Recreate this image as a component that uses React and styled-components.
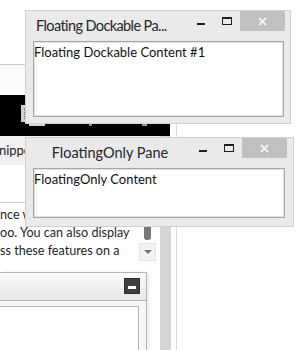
import React from 'react';
import styled, { createGlobalStyle } from 'styled-components';

const GlobalStyle = createGlobalStyle`
    html, body {
        margin: 0;
        padding: 0;
        background: #fff;
    }
    body {
        width: 300px;
        height: 350px;
        overflow: hidden;
        font-family: Lato, 'Open Sans', sans-serif;
        color: #1e1e1e;
    }
`;

const Desktop = styled.div`
    position: relative;
    width: 300px;
    height: 350px;
    overflow: hidden;
    background: #fff;
`;

/* ---------- the docking host behind the floating windows ---------- */

const DockHost = styled.div`
    margin-top: 64px;
    width: 177px;
    height: 286px;
    box-sizing: border-box;
    border-top: 1px solid #cdcdcd;
    border-right: 1px solid #dcdcdc;
    display: flex;
    flex-direction: column;
`;

const TopStrip = styled.div`
    height: 30px;
    background: #fbfbfb;
`;

const ImageBand = styled.div`
    position: relative;
    width: 170px;
    height: 41px;
    background: #000;
`;

const Grip = styled.div`
    position: absolute;
    left: 21px;
    top: 10px;
    width: 6px;
    height: 17px;
    background: #cfcfcf;
    &::after {
        content: '';
        position: absolute;
        left: 3px;
        top: 3px;
        bottom: 3px;
        border-left: 1px dotted #6a6a6a;
    }
`;

const Tab = styled.div`
    position: absolute;
    left: ${p => p.x}px;
    top: 28px;
    width: ${p => p.w}px;
    height: 3px;
    background: ${p => p.color || '#d6d6d6'};
`;

const Body = styled.div`
    flex: 1;
    display: flex;
`;

const LeftCol = styled.div`
    width: 160px;
    display: flex;
    flex-direction: column;
`;

const Splitter = styled.div`
    width: 11px;
    background: #d4d4d4;
`;

const TabRow = styled.div`
    height: 29px;
    line-height: 29px;
    background: #f1f1f1;
    font-size: 13px;
    white-space: nowrap;
    overflow: hidden;
    & > span {
        margin-left: -8px;
    }
`;

const Gap = styled.div`
    height: ${p => p.h}px;
    border-bottom: ${p => (p.line ? '1px solid #cdcdcd' : 'none')};
`;

const TextArea = styled.div`
    height: 58px;
    display: flex;
`;

const Lines = styled.div`
    width: 139px;
    padding-top: 3px;
    font-size: 12.6px;
    line-height: 18px;
    white-space: nowrap;
    overflow: hidden;
`;

const ScrollBar = styled.div`
    width: 17px;
    display: flex;
    flex-direction: column;
    align-items: center;
`;

const Thumb = styled.div`
    width: 7px;
    flex: 1;
    margin-bottom: 3px;
    border-radius: 0 0 3px 3px;
    background: #787878;
`;

const ArrowBox = styled.div`
    width: 17px;
    height: 18px;
    box-sizing: border-box;
    background: #f4f4f4;
    border: 1px solid #e6e6e6;
    display: flex;
    align-items: center;
    justify-content: center;
    &::after {
        content: '';
        border-left: 4px solid transparent;
        border-right: 4px solid transparent;
        border-top: 4px solid #777;
    }
`;

const Panel = styled.div`
    width: 147px;
    flex: 1;
    box-sizing: border-box;
    border-top: 1px solid #b3b3b3;
    border-right: 1px solid #b3b3b3;
    box-shadow: 2px 0 3px rgba(0, 0, 0, 0.08);
    background: #f7f7f7;
    display: flex;
    flex-direction: column;
`;

const PanelHeader = styled.div`
    height: 28px;
    border-bottom: 1px solid #b3b3b3;
    background: linear-gradient(#fbfbfb, #e7e7e7);
    display: flex;
    justify-content: flex-end;
    align-items: flex-start;
    padding: 5px 6px 0 0;
    box-sizing: border-box;
`;

const DarkButton = styled.div`
    width: 16px;
    height: 16px;
    box-sizing: border-box;
    background: #3f3f3f;
    border: 1px solid #2c2c2c;
    display: flex;
    justify-content: center;
    align-items: flex-end;
    padding-bottom: 4px;
    &::after {
        content: '';
        width: 8px;
        height: 3px;
        background: #fff;
    }
`;

const PanelBody = styled.div`
    flex: 1;
    padding: 5px 7px 0 0;
    display: flex;
`;

const InnerBox = styled.div`
    flex: 1;
    background: #fff;
    border-top: 1px solid #b3b3b3;
    border-right: 1px solid #b3b3b3;
`;

/* ---------- floating windows ---------- */

const Window = styled.div`
    position: absolute;
    left: ${p => p.x}px;
    top: ${p => p.y}px;
    width: ${p => p.w}px;
    height: ${p => p.h}px;
    box-sizing: border-box;
    background: #eaeaea;
    border: 1px solid #cfcfcf;
    display: flex;
    flex-direction: column;
`;

const TitleBar = styled.div`
    height: 30px;
    display: flex;
    align-items: flex-start;
`;

const Title = styled.div`
    flex: 1;
    min-width: 0;
    padding: 0 ${p => (p.left ? 0 : 6)}px 0 10px;
    text-align: ${p => (p.left ? 'left' : 'center')};
    letter-spacing: ${p => (p.left ? '-0.6px' : 'normal')};
    font-size: 14.5px;
    line-height: 30px;
    color: #262626;
    white-space: nowrap;
    overflow: hidden;
`;

const Caption = styled.div`
    width: 26px;
    height: 20px;
    position: relative;
    display: flex;
    justify-content: center;
`;

const MinGlyph = styled.div`
    margin-top: 12px;
    width: 8px;
    height: 2px;
    background: #1e1e1e;
`;

const MaxGlyph = styled.div`
    margin-top: 6px;
    width: 10px;
    height: 8px;
    box-sizing: border-box;
    border: 1px solid #1e1e1e;
    border-top-width: 2px;
`;

const CloseButton = styled.div`
    width: 45px;
    height: 20px;
    margin-right: ${p => p.gap}px;
    background: #c1c1c1;
    display: flex;
    align-items: center;
    justify-content: center;
`;

const Content = styled.div`
    flex: 1;
    margin: 0 ${p => p.right}px ${p => p.bottom}px 7px;
    background: #fff;
    border: 1px solid #a6a6a6;
    box-shadow: inset 0 0 0 1px #e2e2e2;
    padding: 2px 0;
    font-size: 13px;
    line-height: 16px;
    color: #111;
`;

function FloatingWindow({ x, y, w, h, title, truncated, gap, right, bottom, children }) {
    return (
        <Window x={x} y={y} w={w} h={h}>
            <TitleBar>
                <Title left={truncated}>{title}</Title>
                <Caption><MinGlyph /></Caption>
                <Caption><MaxGlyph /></Caption>
                <CloseButton gap={gap}>
                    <svg width="9" height="9" viewBox="0 0 9 9">
                        <path d="M1 1L8 8M8 1L1 8" stroke="#fff" strokeWidth="1.6" />
                    </svg>
                </CloseButton>
            </TitleBar>
            <Content right={right} bottom={bottom}>{children}</Content>
        </Window>
    );
}

export default function App() {
    return (
        <Desktop>
            <GlobalStyle />
            <DockHost>
                <TopStrip />
                <ImageBand>
                    <Grip />
                    <Tab x={29} w={16} />
                    <Tab x={89} w={3} color="#8a8a8a" />
                    <Tab x={142} w={5} color="#9a9a9a" />
                </ImageBand>
                <Body>
                    <LeftCol>
                        <TabRow><span>Snippets</span></TabRow>
                        <Gap h={37} line />
                        <TextArea>
                            <Lines>
                                <div>nce with the</div>
                                <div>oo. You can also display</div>
                                <div>ss these features on a</div>
                            </Lines>
                            <ScrollBar>
                                <Thumb />
                                <ArrowBox />
                            </ScrollBar>
                        </TextArea>
                        <Gap h={11} />
                        <Panel>
                            <PanelHeader>
                                <DarkButton />
                            </PanelHeader>
                            <PanelBody>
                                <InnerBox />
                            </PanelBody>
                        </Panel>
                    </LeftCol>
                    <Splitter />
                </Body>
            </DockHost>

            <FloatingWindow
                x={25} y={10} w={266} h={114}
                title="Floating Dockable Pa..."
                truncated
                gap={5} right={6} bottom={6}
            >
                Floating Dockable Content #1
            </FloatingWindow>
            <FloatingWindow
                x={25} y={137} w={269} h={90}
                title="FloatingOnly Pane"
                gap={6} right={8} bottom={8}
            >
                FloatingOnly Content
            </FloatingWindow>
        </Desktop>
    );
}
